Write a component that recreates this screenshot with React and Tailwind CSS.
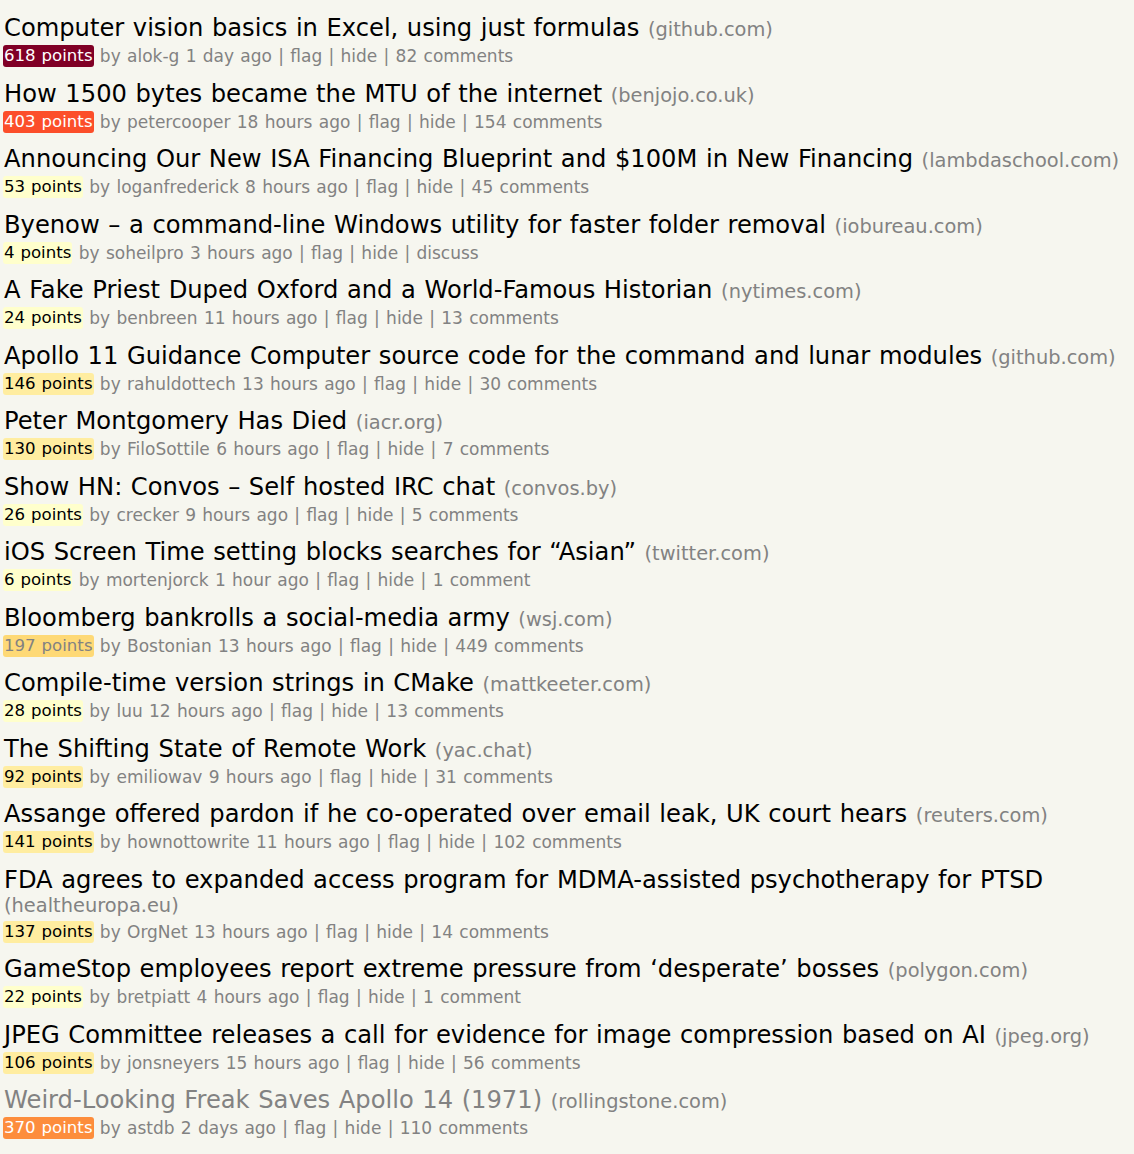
import React from "react";

const items = [
  ["Computer vision basics in Excel, using just formulas", "github.com", 618, "alok-g", "1 day ago", "82 comments", "bg-[#800026] text-white"],
  ["How 1500 bytes became the MTU of the internet", "benjojo.co.uk", 403, "petercooper", "18 hours ago", "154 comments", "bg-[#fc4e2a] text-white"],
  ["Announcing Our New ISA Financing Blueprint and $100M in New Financing", "lambdaschool.com", 53, "loganfrederick", "8 hours ago", "45 comments", "bg-[#ffffcc] text-black"],
  ["Byenow – a command-line Windows utility for faster folder removal", "iobureau.com", 4, "soheilpro", "3 hours ago", "discuss", "bg-[#ffffcc] text-black"],
  ["A Fake Priest Duped Oxford and a World-Famous Historian", "nytimes.com", 24, "benbreen", "11 hours ago", "13 comments", "bg-[#ffffcc] text-black"],
  ["Apollo 11 Guidance Computer source code for the command and lunar modules", "github.com", 146, "rahuldottech", "13 hours ago", "30 comments", "bg-[#ffeda0] text-black"],
  ["Peter Montgomery Has Died", "iacr.org", 130, "FiloSottile", "6 hours ago", "7 comments", "bg-[#ffeda0] text-black"],
  ["Show HN: Convos – Self hosted IRC chat", "convos.by", 26, "crecker", "9 hours ago", "5 comments", "bg-[#ffffcc] text-black"],
  ["iOS Screen Time setting blocks searches for “Asian”", "twitter.com", 6, "mortenjorck", "1 hour ago", "1 comment", "bg-[#ffffcc] text-black"],
  ["Bloomberg bankrolls a social-media army", "wsj.com", 197, "Bostonian", "13 hours ago", "449 comments", "bg-[#fed976] text-[#828282]"],
  ["Compile-time version strings in CMake", "mattkeeter.com", 28, "luu", "12 hours ago", "13 comments", "bg-[#ffffcc] text-black"],
  ["The Shifting State of Remote Work", "yac.chat", 92, "emiliowav", "9 hours ago", "31 comments", "bg-[#ffeda0] text-black"],
  ["Assange offered pardon if he co-operated over email leak, UK court hears", "reuters.com", 141, "hownottowrite", "11 hours ago", "102 comments", "bg-[#ffeda0] text-black"],
  ["FDA agrees to expanded access program for MDMA-assisted psychotherapy for PTSD", "healtheuropa.eu", 137, "OrgNet", "13 hours ago", "14 comments", "bg-[#ffeda0] text-black"],
  ["GameStop employees report extreme pressure from ‘desperate’ bosses", "polygon.com", 22, "bretpiatt", "4 hours ago", "1 comment", "bg-[#ffffcc] text-black"],
  ["JPEG Committee releases a call for evidence for image compression based on AI", "jpeg.org", 106, "jonsneyers", "15 hours ago", "56 comments", "bg-[#ffeda0] text-black"],
  ["Weird-Looking Freak Saves Apollo 14 (1971)", "rollingstone.com", 370, "astdb", "2 days ago", "110 comments", "bg-[#fd8d3c] text-white", true],
];

export default function App() {
  return (
    <div className="min-h-[1154px] bg-[#f6f6ef] pl-[4px] pr-[8px] pt-[16px] font-['DejaVu_Sans',Verdana,sans-serif]">
      {items.map(([title, domain, pts, user, ago, comments, badge, visited], i) => (
        <div key={i} className="mb-[14.5px]">
          <div className="text-[24.2px] leading-[24px] [word-spacing:0.9px]">
            <span className={visited ? "text-[#828282]" : "text-black"}>{title}</span>{" "}
            <span className="text-[19.4px] leading-[12px] text-[#828282] [word-spacing:0px]">({domain})</span>
          </div>
          <div className="mt-[5px] flex h-[22px] items-center text-[17px] leading-[22px] text-[#828282] [word-spacing:0.9px]">
            <span className={`-ml-[1px] rounded-[3px] px-[1px] text-[16.6px] [word-spacing:0.6px] ${badge}`}>{pts} points</span>
            <span className="whitespace-pre"> by {user} {ago} | flag | hide | {comments}</span>
          </div>
        </div>
      ))}
    </div>
  );
}
